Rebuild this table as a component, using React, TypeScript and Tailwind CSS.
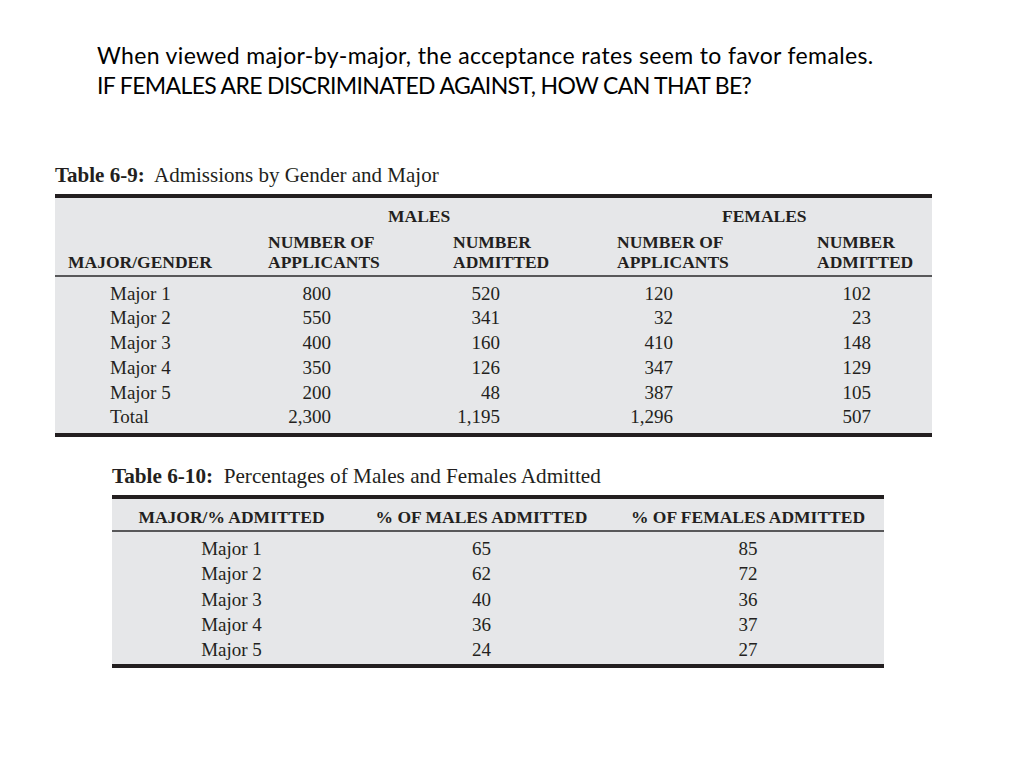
const serif = "font-['Liberation_Serif','Times_New_Roman',serif]";

const admissions = [
  { major: "Major 1", mApp: "800", mAdm: "520", fApp: "120", fAdm: "102" },
  { major: "Major 2", mApp: "550", mAdm: "341", fApp: "32", fAdm: "23" },
  { major: "Major 3", mApp: "400", mAdm: "160", fApp: "410", fAdm: "148" },
  { major: "Major 4", mApp: "350", mAdm: "126", fApp: "347", fAdm: "129" },
  { major: "Major 5", mApp: "200", mAdm: "48", fApp: "387", fAdm: "105" },
  { major: "Total", mApp: "2,300", mAdm: "1,195", fApp: "1,296", fAdm: "507" },
];

const percentages = [
  { major: "Major 1", m: "65", f: "85" },
  { major: "Major 2", m: "62", f: "72" },
  { major: "Major 3", m: "40", f: "36" },
  { major: "Major 4", m: "36", f: "37" },
  { major: "Major 5", m: "24", f: "27" },
];

const cols1 = "grid grid-cols-[213px_185px_164px_200px_115px]";
const cols2 = "grid grid-cols-[239px_261px_272px]";

function AdmissionsTable() {
  return (
    <div className="ml-[55px] w-[877px]">
      <div className="h-[24px] text-[21px] leading-[24px] text-[#231f20] whitespace-pre">
        <span className="font-bold">Table 6-9:</span>
        {"  Admissions by Gender and Major"}
      </div>
      <div className="mt-[7px] bg-[#e6e7e9] border-t-4 border-b-4 border-[#231f20] text-[#231f20]">
        <div className="border-b-2 border-[#58585a] pt-[8px] pb-[3px] text-[17.5px] leading-[20px] font-bold">
          <div className={cols1}>
            <div />
            <div className="col-span-2 pl-[120px]">MALES</div>
            <div className="col-span-2 pl-[105px]">FEMALES</div>
          </div>
          <div className={`${cols1} mt-[6px] items-end`}>
            <div className="pl-[13px]">MAJOR/GENDER</div>
            <div>
              NUMBER OF
              <br />
              APPLICANTS
            </div>
            <div>
              NUMBER
              <br />
              ADMITTED
            </div>
            <div>
              NUMBER OF
              <br />
              APPLICANTS
            </div>
            <div>
              NUMBER
              <br />
              ADMITTED
            </div>
          </div>
        </div>
        <div className="pt-[4.5px] pb-[2.5px] text-[19px] leading-[24.8px]">
          {admissions.map((row) => (
            <div key={row.major} className={cols1}>
              <div className="pl-[55px]">{row.major}</div>
              <div className="text-right pr-[122px]">{row.mApp}</div>
              <div className="text-right pr-[117px]">{row.mAdm}</div>
              <div className="text-right pr-[144px]">{row.fApp}</div>
              <div className="text-right pr-[61px]">{row.fAdm}</div>
            </div>
          ))}
        </div>
      </div>
    </div>
  );
}

function PercentTable() {
  return (
    <div className="ml-[112px] mt-[27px] w-[772px]">
      <div className="h-[24px] text-[21.2px] leading-[24px] text-[#231f20] whitespace-pre">
        <span className="font-bold">Table 6-10:</span>
        {"  Percentages of Males and Females Admitted"}
      </div>
      <div className="mt-[7px] bg-[#e6e7e9] border-t-4 border-b-4 border-[#231f20] text-[#231f20]">
        <div className={`${cols2} border-b-2 border-[#58585a] pt-[8px] pb-[3px] text-[17.5px] leading-[20px] font-bold text-center`}>
          <div>MAJOR/% ADMITTED</div>
          <div>% OF MALES ADMITTED</div>
          <div>% OF FEMALES ADMITTED</div>
        </div>
        <div className="pt-[4.5px] pb-[1.5px] text-[19px] leading-[25.2px]">
          {percentages.map((row) => (
            <div key={row.major} className={`${cols2} text-center`}>
              <div>{row.major}</div>
              <div>{row.m}</div>
              <div>{row.f}</div>
            </div>
          ))}
        </div>
      </div>
    </div>
  );
}

export default function App() {
  return (
    <div className="w-[1024px] h-[768px] bg-white overflow-hidden">
      <div className="pl-[97px] pt-[40px] text-[23px] leading-[30px] text-black font-['Lato','Open_Sans',sans-serif]">
        <div className="tracking-[0.35px]">When viewed major-by-major, the acceptance rates seem to favor females.</div>
        <div className="tracking-[-0.65px]">IF FEMALES ARE DISCRIMINATED AGAINST, HOW CAN THAT BE?</div>
      </div>
      <div className={`${serif} mt-[63px]`}>
        <AdmissionsTable />
        <PercentTable />
      </div>
    </div>
  );
}
